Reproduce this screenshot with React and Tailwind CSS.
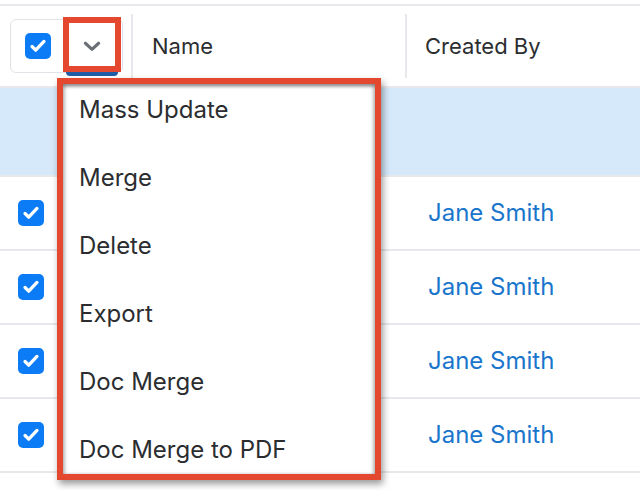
const rows = ['Jane Smith', 'Jane Smith', 'Jane Smith', 'Jane Smith']

const actions = ['Mass Update', 'Merge', 'Delete', 'Export', 'Doc Merge', 'Doc Merge to PDF']

function Checkbox({ className = '' }) {
  return (
    <span className={`flex h-[26px] w-[26px] items-center justify-center rounded-[5px] bg-[#0b7bf6] ${className}`}>
      <svg viewBox="0 0 24 24" className="h-[22px] w-[22px]" fill="none" stroke="white" strokeWidth="3.6" strokeLinecap="round" strokeLinejoin="round">
        <path d="M5.5 12.5l4 4L18.5 7" />
      </svg>
    </span>
  )
}

function Chevron() {
  return (
    <svg viewBox="0 0 20 20" className="h-[22px] w-[22px]" fill="none" stroke="#6b6f75" strokeWidth="2.8" strokeLinecap="round" strokeLinejoin="round">
      <path d="M4 7.5l6 5.5 6-5.5" />
    </svg>
  )
}

export default function App() {
  return (
    <div className="relative h-[490px] w-[640px] overflow-hidden bg-white font-['Inter',sans-serif] text-[22px] text-[#2b2d30]">
      <div className="h-[4px] bg-white" />
      <div className="h-[2px] bg-[#e6e8eb]" />

      {/* header row */}
      <div className="flex h-[82px] border-b-2 border-[#e6e8eb]">
        <div className="my-[8px] flex w-[133px] items-center border-r-2 border-[#e6e8eb] pl-[10px]">
          <div className="flex h-[54px] w-[113px] items-center rounded-[6px] border border-[#dfe2e6]">
            <Checkbox className="ml-[14px]" />
            <div className="relative ml-[13px] flex h-[54px] w-[56px] items-center justify-center">
              <Chevron />
              <div className="absolute bottom-[-3px] left-[2px] right-[2px] h-[5px] rounded-b-[4px] bg-[#1f5da6]" />
              <div className="absolute -top-[2px] -left-[1px] right-[-1px] bottom-[1px] border-[6px] border-[#e4482f]" />
            </div>
          </div>
        </div>
        <div className="my-[8px] flex w-[274px] items-center border-r-2 border-[#e6e8eb] pl-[19px]">Name</div>
        <div className="flex flex-1 items-center pl-[18px]">Created By</div>
      </div>

      {/* selected row */}
      <div className="h-[89px] border-b-2 border-[#e6e8eb] bg-[#d6e9fb]" />

      {rows.map((name, index) => (
        <div key={index} className="flex h-[74px] items-center border-b-2 border-[#e6e8eb]">
          <div className="w-[133px] pl-[18px]">
            <Checkbox />
          </div>
          <div className="w-[274px]" />
          <div className="pl-[21px] text-[24px] text-[#1a76cc]">{name}</div>
        </div>
      ))}

      {/* actions menu */}
      <div className="absolute left-[57px] top-[78px] w-[324px] border-[6px] border-[#e4482f] bg-white shadow-[2px_4px_7px_rgba(0,0,0,0.4)]">
        <div className="h-[390px] overflow-hidden text-[24px] shadow-[inset_0_3px_3px_rgba(0,0,0,0.35),inset_-3px_0_3px_rgba(0,0,0,0.15),inset_3px_0_3px_rgba(0,0,0,0.15)]">
          <div className="-mt-[8px] flex flex-col">
            {actions.map((label) => (
              <div key={label} className="flex h-[68px] shrink-0 items-center pl-[16px]">
                {label}
              </div>
            ))}
          </div>
        </div>
      </div>
    </div>
  )
}
